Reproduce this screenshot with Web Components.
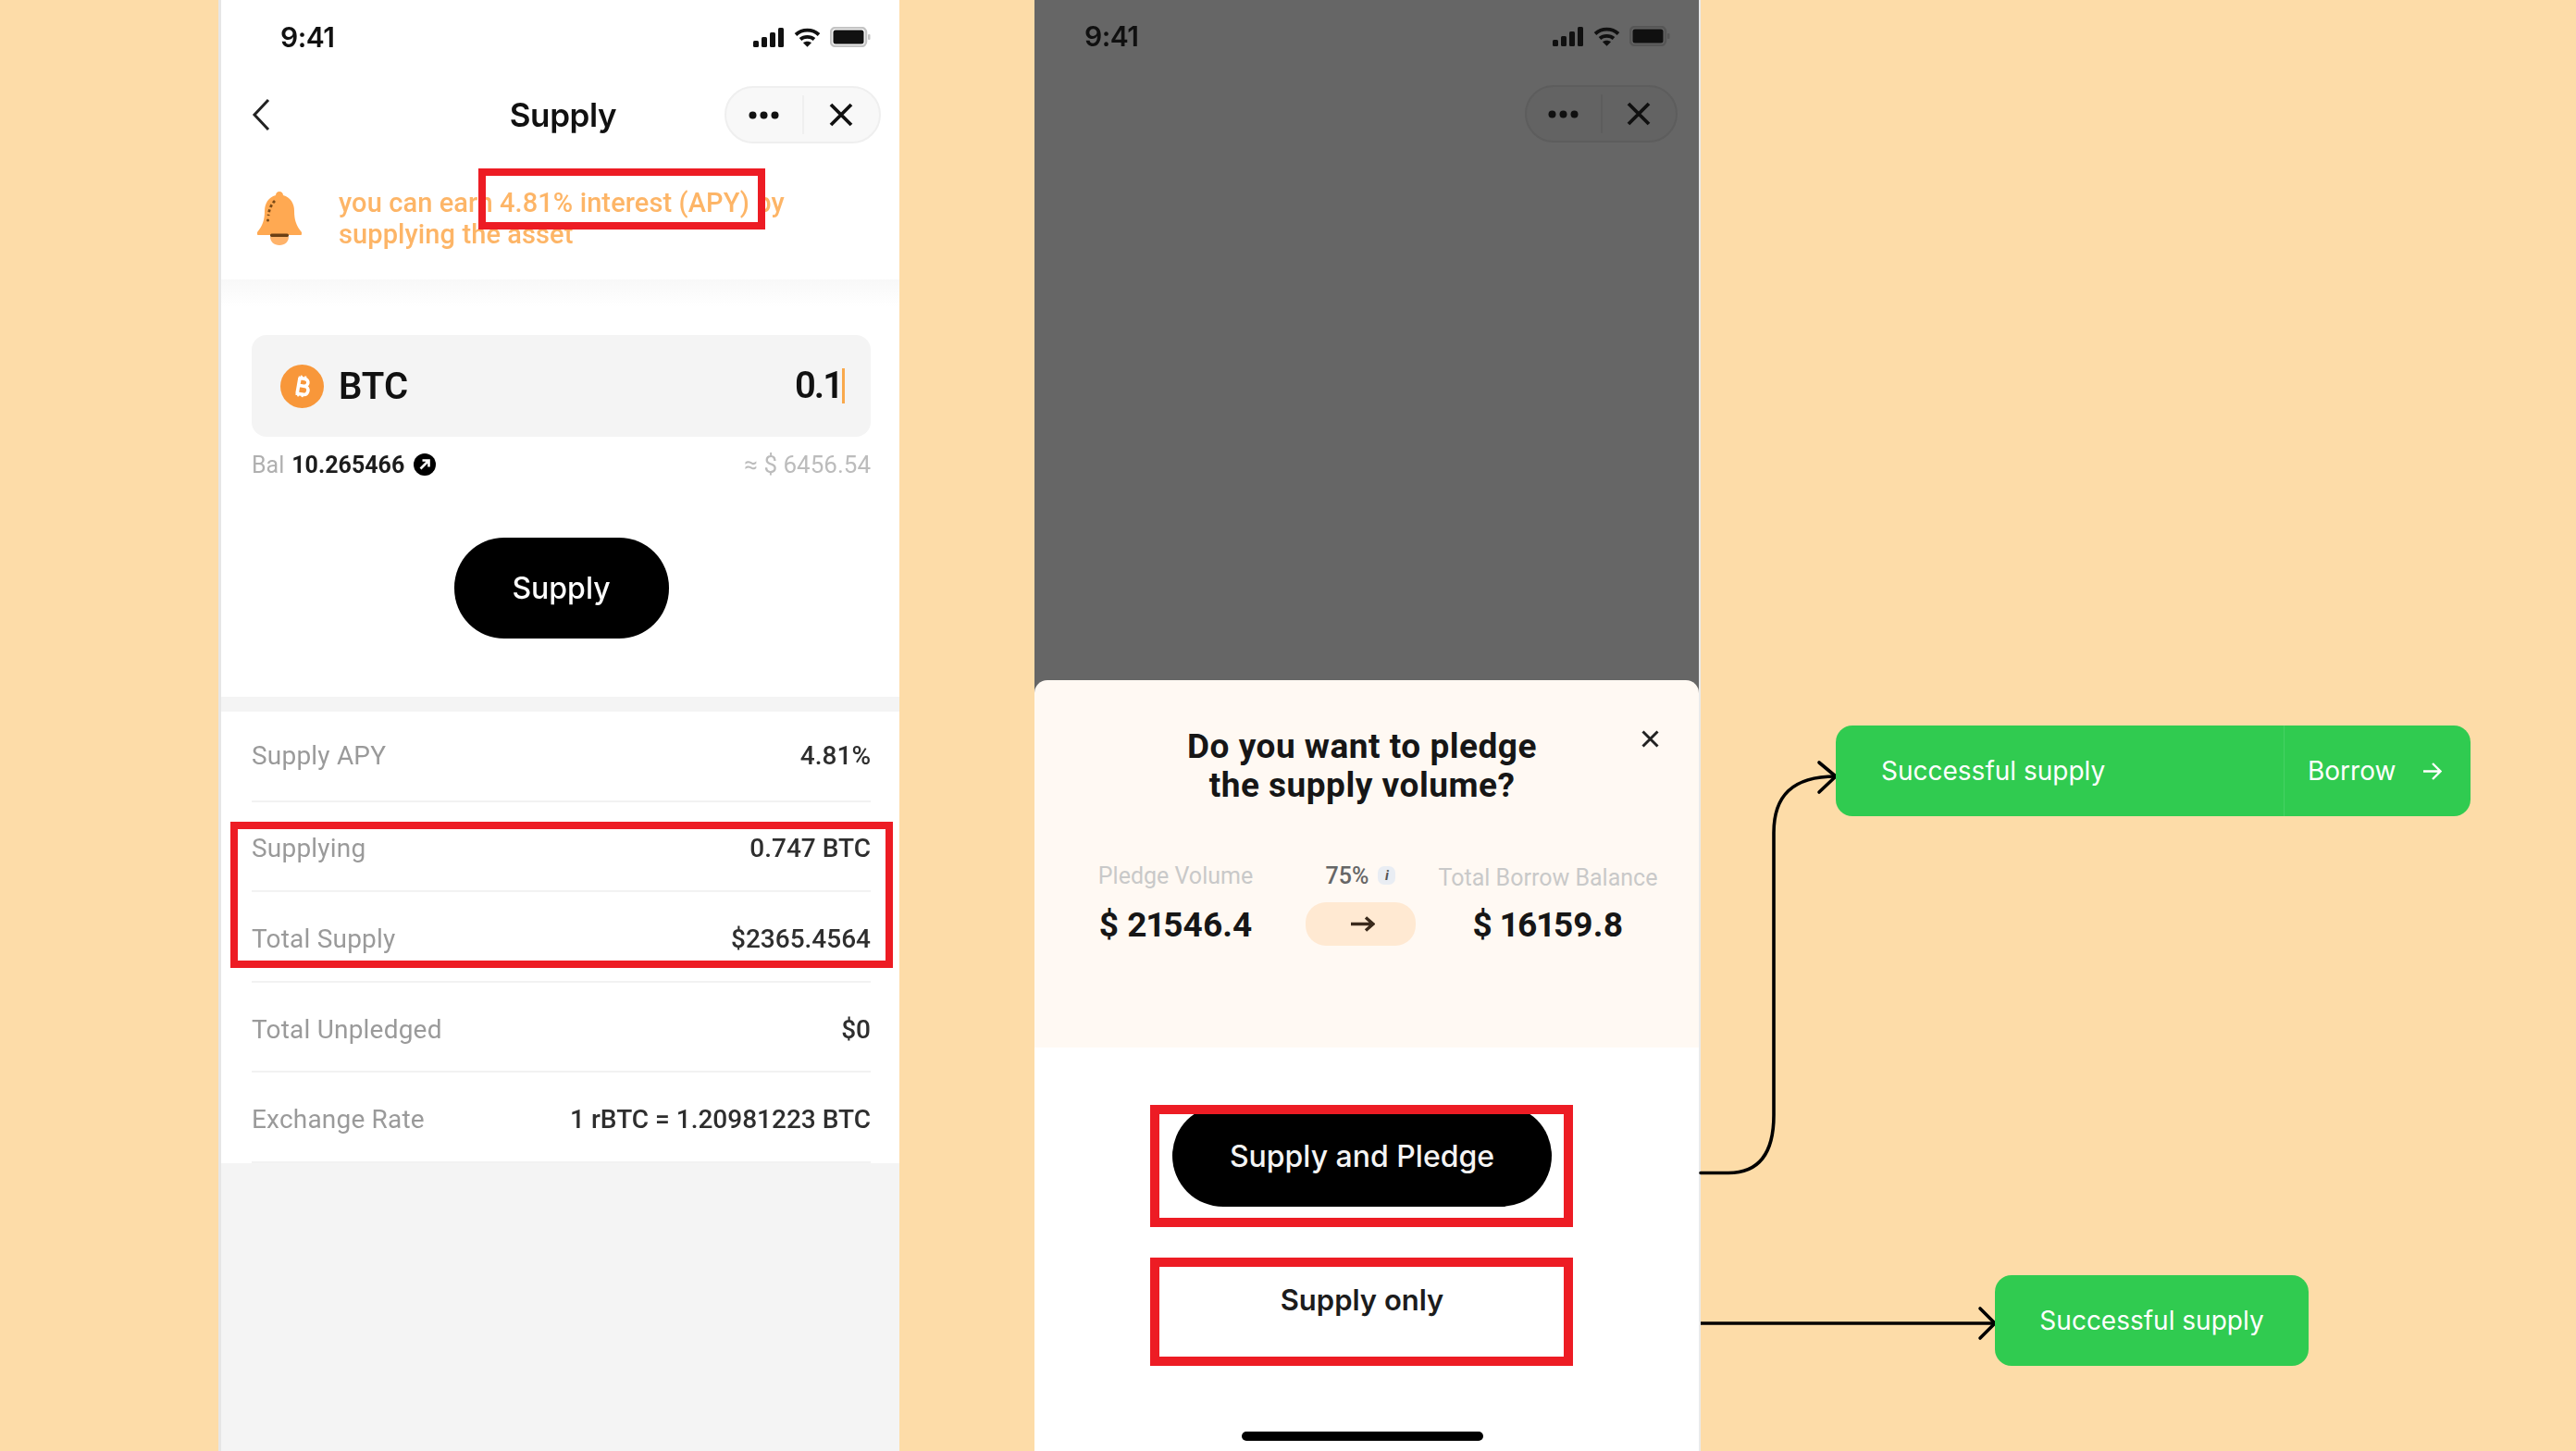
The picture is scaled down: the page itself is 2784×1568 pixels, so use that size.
<!DOCTYPE html>
<html>
<head>
<meta charset="utf-8">
<title>Supply flow</title>
<style>
  html, body { margin: 0; padding: 0; background: #fddca8; }
  body { width: 2784px; height: 1568px; overflow: hidden; font-family: Roboto, "Liberation Sans", sans-serif; }
  flow-canvas { width: 2784px; height: 1568px; }
  stat-row:first-child { --row-shift: 0px; }
</style>
</head>
<body>
<flow-canvas>
  <supply-screen>
    <stat-row>Supply APY<span slot="value">4.81%</span></stat-row>
    <stat-row>Supplying<span slot="value">0.747 BTC</span></stat-row>
    <stat-row>Total Supply<span slot="value">$2365.4564</span></stat-row>
    <stat-row>Total Unpledged<span slot="value">$0</span></stat-row>
    <stat-row>Exchange Rate<span slot="value">1 rBTC = 1.20981223 BTC</span></stat-row>
  </supply-screen>

  <pledge-screen></pledge-screen>

  <flow-arrows></flow-arrows>

  <success-toast style="left:1984px;top:784px;width:686px;height:98px;--pad:49px">
    Successful supply
    <span slot="action">Borrow</span>
  </success-toast>
  <success-toast center style="left:2156px;top:1378px;width:339px;height:98px">Successful supply</success-toast>

  <!-- red review marks sit on top of the screens -->
  <mark-box style="left:517px;top:182px;width:310px;height:66px"></mark-box>
  <mark-box style="left:249px;top:888px;width:716px;height:158px"></mark-box>
  <mark-box thick style="left:1243px;top:1194px;width:457px;height:132px"></mark-box>
  <mark-box thick style="left:1243px;top:1359px;width:457px;height:117px"></mark-box>
</flow-canvas>

<script>
// Small base class, each element only brings its own markup
class ShadowPart extends HTMLElement {
  constructor() {
    super();
    this.attachShadow({ mode: "open" });
    const t = document.createElement("template");
    t.innerHTML = this.markup;
    this.shadowRoot.appendChild(t.content.cloneNode(true));
  }
}

class FlowCanvas extends ShadowPart {
  get markup() {
    return `
    <style>
      :host { display: block; position: relative; overflow: hidden; background: #fddca8; }
    </style>
    <slot></slot>`;
  }
}

class StatusBar extends ShadowPart {
  get markup() {
    return `
    <style>
      :host {
        display: flex;
        align-items: center;
        justify-content: space-between;
        height: var(--bar-h, 80px);
        padding: 0 31px 0 var(--time-left, 64px);
        color: var(--ink, #111);
      }
      .time { font: 600 30px Inter, "Liberation Sans", sans-serif; letter-spacing: -0.5px; }
      .icons { display: flex; align-items: center; gap: 10px; }
      svg { display: block; }
    </style>
    <span class="time">9:41</span>
    <span class="icons">
      <svg width="34" height="21" viewBox="0 0 34 21" fill="currentColor">
        <rect x="0" y="14" width="6" height="7" rx="1.5"/>
        <rect x="9" y="10" width="6" height="11" rx="1.5"/>
        <rect x="18" y="5" width="6" height="16" rx="1.5"/>
        <rect x="27" y="0" width="6" height="21" rx="1.5"/>
      </svg>
      <svg width="29" height="21" viewBox="0 0 29 21" fill="none" stroke="currentColor" stroke-width="3.8">
        <path d="M2 7.500C9 1 20 1 27 7.500"/>
        <path d="M7 12.500C11 9 18 9 22 12.500"/>
        <path d="M14.500 20.800L10 16.200C12.500 14.200 16.500 14.200 19 16.200Z" fill="currentColor" stroke="none"/>
      </svg>
      <svg width="44" height="22" viewBox="0 0 44 22">
        <rect x="1" y="1" width="38" height="20" rx="5" fill="none" stroke="var(--shell, #c4c4c4)" stroke-width="2.500"/>
        <rect x="3.500" y="3.500" width="33" height="15" rx="2.500" fill="currentColor"/>
        <rect x="41" y="8" width="2.500" height="6" rx="1" fill="var(--shell, #c4c4c4)"/>
      </svg>
    </span>`;
  }
}

class NavPill extends ShadowPart {
  get markup() {
    return `
    <style>
      :host {
        display: grid;
        grid-template-columns: 1fr 1fr;
        box-sizing: border-box;
        align-items: center;
        justify-items: center;
        width: var(--pill-w, 169px);
        height: 62px;
        border-radius: 31px;
        border: 2px solid var(--pill-line, #efefef);
        background: var(--pill-bg, #f8f8f8);
        color: var(--ink, #111);
      }
      .more { display: flex; align-items: center; justify-content: center; width: 100%; height: 42px; border-right: 2px solid var(--pill-line, #efefef); }
      svg { display: block; }
    </style>
    <span class="more">
      <svg width="33" height="9" viewBox="0 0 33 9" fill="currentColor"><circle cx="4.500" cy="4.500" r="4"/><circle cx="16.500" cy="4.500" r="4"/><circle cx="28.500" cy="4.500" r="4"/></svg>
    </span>
    <svg width="26" height="26" viewBox="0 0 26 26" fill="none" stroke="currentColor" stroke-width="3.800"><path d="M2 2L24 24M24 2L2 24"/></svg>`;
  }
}

class StatRow extends ShadowPart {
  get markup() {
    return `
    <style>
      :host {
        display: flex;
        align-items: center;
        justify-content: space-between;
        box-sizing: border-box;
        height: 97.6px;
        padding-top: var(--row-shift, 5px);
        border-bottom: 2px solid #f2f2f2;
        font: 400 28px Roboto, "Liberation Sans", sans-serif;
        letter-spacing: 0.2px;
        color: #9a9a9a;
      }
      .value { color: #2e2e2e; font-weight: 500; letter-spacing: 0; }
    </style>
    <span><slot></slot></span>
    <span class="value"><slot name="value"></slot></span>`;
  }
}

class SupplyScreen extends ShadowPart {
  get markup() {
    return `
    <style>
      :host {
        display: block;
        position: absolute;
        left: 236px;
        top: 0;
        width: 736px;
        height: 1568px;
        box-sizing: border-box;
        border-left: 3px solid #e6e6e6;
        background: #fff;
        overflow: hidden;
      }
      .screen { display: flex; flex-direction: column; height: 100%; filter: blur(0.7px); font-family: Roboto, "Liberation Sans", sans-serif; }
      nav {
        display: grid;
        grid-template-columns: 1fr auto 1fr;
        align-items: center;
        height: 62px;
        margin-top: 13px;
        padding: 0 20px 0 33px;
      }
      nav svg { display: block; }
      nav nav-pill { justify-self: end; }
      h1 { margin: 0 7px 0 0; font: 600 35px Inter, "Liberation Sans", sans-serif; color: #111; letter-spacing: -0.4px; }
      .banner {
        display: flex;
        align-items: center;
        gap: 40px;
        padding: 47px 90px 32px 39px;
        color: #fdb567;
        font: 500 29px/34px Roboto, "Liberation Sans", sans-serif;
        letter-spacing: 0.1px;
      }
      .banner svg { flex: none; display: block; }
      .form {
        display: flex;
        flex-direction: column;
        padding: 60px 31px 63px 33px;
        background: linear-gradient(#f8f8f8, #fff 30px);
      }
      .input {
        display: flex;
        align-items: center;
        gap: 16px;
        height: 110px;
        padding: 0 28px 0 31px;
        border-radius: 16px;
        background: #f4f4f4;
        color: #111;
        font: 600 40px Roboto, "Liberation Sans", sans-serif;
      }
      .input svg { display: block; }
      .amount { margin-left: auto; border-right: 3px solid #f9a94c; line-height: 38px; letter-spacing: -2px; }
      .bal {
        display: flex;
        align-items: center;
        gap: 8px;
        height: 24px;
        margin-top: 18px;
        color: #b0b0b0;
        font-size: 25px;
      }
      .bal b { color: #1c1c1c; font-weight: 700; }
      .bal svg { display: block; margin-left: 2px; }
      .usd { margin-left: auto; color: #bcbcbc; font-size: 26px; }
      .go {
        align-self: center;
        display: flex;
        align-items: center;
        justify-content: center;
        width: 232px;
        height: 109px;
        margin-top: 67px;
        border-radius: 54px;
        background: #000;
        color: #fff;
        font: 500 32px Inter, "Liberation Sans", sans-serif;
      }
      .band { height: 16px; flex: none; background: #f4f4f4; }
      .stats { padding: 0 31px 0 33px; }
      .rest { flex: 1; background: #f4f4f4; }
    </style>
    <div class="screen">
      <status-bar></status-bar>
      <nav>
        <svg width="20" height="36" viewBox="0 0 20 36" fill="none" stroke="#222" stroke-width="3"><path d="M18 2L3 18L18 34"/></svg>
        <h1>Supply</h1>
        <nav-pill></nav-pill>
      </nav>
      <div class="banner">
        <svg width="48" height="58" viewBox="0 0 48 58">
          <path d="M24 0c2.500 0 4 1.800 4 4 8 2 12 9 12 17 0 9 2 16 8 23 1 2 0 3-2 3H2c-2 0-3-1-2-3 6-7 8-14 8-23 0-8 4-15 12-17 0-2.200 1.500-4 4-4z" fill="#ffa952"/>
          <path d="M14 49h20c0 5-4 9-10 9s-10-4-10-9z" fill="#ffb36a"/>
          <rect x="14" y="45.500" width="20" height="3.500" rx="1.500" fill="#6a3f14"/>
          <path d="M19 10C16 13 13 18 12 26" fill="none" stroke="#7a4a17" stroke-width="2.800" stroke-dasharray="3 2.500"/>
          <circle cx="11.500" cy="31" r="1.500" fill="#7a4a17"/>
        </svg>
        <span>you can earn 4.81% interest (APY) by supplying the asset</span>
      </div>
      <div class="form">
        <div class="input">
          <svg width="47" height="47" viewBox="0 0 47 47">
            <circle cx="23.500" cy="23.500" r="23.500" fill="#f8973a"/>
            <g transform="rotate(10 23.500 23.500)" fill="none" stroke="#fff" stroke-width="3.600">
              <path d="M18 15h7c5.500 0 5.500 8 0 8h-7M18 23h8.500c5.500 0 5.500 9 0 9h-8.500M19.500 15v17"/>
              <path d="M21 12v3M25.500 12v3M21 32v3M25.500 32v3" stroke-width="2"/>
            </g>
          </svg>
          <span>BTC</span>
          <span class="amount">0.1</span>
        </div>
        <div class="bal">
          <span>Bal</span>
          <b>10.265466</b>
          <svg width="24" height="24" viewBox="0 0 24 24">
            <circle cx="12" cy="12" r="12" fill="#000"/>
            <path d="M7.500 16.500L16 8M9.500 7.500H16.500V14.500" fill="none" stroke="#fff" stroke-width="2.600"/>
          </svg>
          <span class="usd">≈ $ 6456.54</span>
        </div>
        <div class="go">Supply</div>
      </div>
      <div class="band"></div>
      <div class="stats"><slot></slot></div>
      <div class="rest"></div>
    </div>`;
  }
}

class PledgeScreen extends ShadowPart {
  get markup() {
    return `
    <style>
      :host {
        display: block;
        position: absolute;
        left: 1118px;
        top: 0;
        width: 720px;
        height: 1568px;
        box-sizing: border-box;
        border-right: 2px solid #eaeaea;
        overflow: hidden;
        background: #666;
      }
      .screen { display: flex; flex-direction: column; height: 100%; filter: blur(0.7px); }
      .dim {
        flex: 1;
        --ink: #101010;
        --shell: #565656;
        --time-left: 54px;
        --bar-h: 78px;
        --pill-w: 165px;
        --pill-bg: #636363;
        --pill-line: #5d5d5d;
      }
      .top { display: flex; justify-content: flex-end; margin-top: 14px; padding-right: 23px; }
      .sheet {
        position: relative;
        box-sizing: border-box;
        height: 397px;
        padding-top: 51px;
        border-radius: 14px 14px 0 0;
        background: #fff9f3;
      }
      h2 {
        margin: 0;
        padding-right: 10px;
        text-align: center;
        color: #161616;
        font: 700 37px/42px Roboto, "Liberation Sans", sans-serif;
        letter-spacing: 0.5px;
      }
      .close { position: absolute; left: 656px; top: 54px; display: block; }
      .figures {
        display: grid;
        grid-template-columns: 281px 119px 286px;
        grid-template-rows: 24px 47px;
        row-gap: 17px;
        margin-top: 64px;
        padding-left: 12px;
        justify-items: center;
        align-items: center;
        font-family: Roboto, "Liberation Sans", sans-serif;
      }
      .cap { color: #c9c9c9; font-size: 25px; }
      .cap.low { position: relative; top: 2px; }
      .ratio { display: flex; align-items: center; gap: 10px; color: #666; font-size: 25px; font-weight: 500; }
      .info {
        display: flex;
        align-items: center;
        justify-content: center;
        width: 19px;
        height: 20px;
        border-radius: 7px;
        background: #e9edf3;
        color: #555;
        font-size: 15px;
        font-style: italic;
        font-weight: 700;
      }
      .sum { color: #161616; font-size: 37px; font-weight: 700; font-variant-numeric: proportional-nums; position: relative; top: 1px; }
      .pill {
        display: flex;
        align-items: center;
        justify-content: center;
        width: 119px;
        height: 47px;
        border-radius: 22px;
        background: #ffe9d2;
      }
      .pill svg { display: block; margin-left: 5px; }
      .actions {
        flex: none;
        display: flex;
        flex-direction: column;
        align-items: center;
        box-sizing: border-box;
        height: 436px;
        padding: 62px 10px 0 0;
        background: #fff;
        font-family: Inter, "Liberation Sans", sans-serif;
      }
      .primary {
        display: flex;
        align-items: center;
        justify-content: center;
        width: 410px;
        height: 110px;
        border-radius: 55px;
        background: #000;
        color: #f4f4f4;
        font-size: 32px;
        font-weight: 500;
      }
      .plain { margin-top: 81px; height: 40px; line-height: 40px; color: #1c1c1c; font-size: 31px; font-weight: 600; }
      .home { margin-top: 122px; width: 261px; height: 10px; border-radius: 5px; background: #000; }
    </style>
    <div class="screen">
      <div class="dim">
        <status-bar></status-bar>
        <div class="top"><nav-pill></nav-pill></div>
      </div>
      <div class="sheet">
        <h2>Do you want to pledge<br>the supply volume?</h2>
        <svg class="close" width="19" height="19" viewBox="0 0 19 19" fill="none" stroke="#222" stroke-width="3"><path d="M1.500 1.500L17.500 17.500M17.500 1.500L1.500 17.500"/></svg>
        <div class="figures">
          <span class="cap">Pledge Volume</span>
          <span class="ratio">75% <span class="info">i</span></span>
          <span class="cap low">Total Borrow Balance</span>
          <span class="sum">$ 21546.4</span>
          <span class="pill">
            <svg width="26" height="19" viewBox="0 0 26 19" fill="none" stroke="#3a2a1c" stroke-width="3.400"><path d="M0 9.500H24M16 2.500L24 9.500L16 16.500"/></svg>
          </span>
          <span class="sum">$ 16159.8</span>
        </div>
      </div>
      <div class="actions">
        <div class="primary">Supply and Pledge</div>
        <div class="plain">Supply only</div>
        <div class="home"></div>
      </div>
    </div>`;
  }
}

class SuccessToast extends ShadowPart {
  get markup() {
    return `
    <style>
      :host {
        display: flex;
        position: absolute;
        box-sizing: border-box;
        border-radius: 18px;
        background: #30cb50;
        color: #fff;
        font: 400 28px Inter, "Liberation Sans", sans-serif;
      }
      .main { flex: 1; display: flex; align-items: center; padding-left: var(--pad, 0); }
      :host([center]) .main { justify-content: center; }
      .action {
        display: flex;
        align-items: center;
        gap: 29px;
        width: 202px;
        box-sizing: border-box;
        padding-left: 25px;
        border-left: 1px solid #45d263;
      }
      :host([center]) .action { display: none; }
      svg { display: block; }
    </style>
    <div class="main"><slot></slot></div>
    <div class="action">
      <slot name="action"></slot>
      <svg width="21" height="21" viewBox="0 0 21 21" fill="none" stroke="#fff" stroke-width="2.400"><path d="M1 10.500H19M11 2L19.500 10.500L11 19"/></svg>
    </div>`;
  }
}

class MarkBox extends ShadowPart {
  get markup() {
    return `
    <style>
      :host {
        display: block;
        position: absolute;
        box-sizing: border-box;
        border: 8px solid #ed1c24;
      }
      :host([thick]) { border-width: 10px; }
    </style>`;
  }
}

class FlowArrows extends ShadowPart {
  get markup() {
    return `
    <style>
      :host { display: block; position: absolute; left: 0; top: 0; }
      svg { display: block; }
    </style>
    <svg width="2784" height="1568" viewBox="0 0 2784 1568" fill="none" stroke="#000" stroke-width="3.600" stroke-linecap="round" stroke-linejoin="round">
      <path d="M1838 1267.500H1868C1898 1267.500 1917 1250 1917 1205V900C1917 860 1937 839 1984 839"/>
      <path d="M1966 824L1984 839L1966 856"/>
      <path d="M1838 1430H2156" stroke-linecap="butt"/>
      <path d="M2140 1414L2156 1430L2140 1446"/>
    </svg>`;
  }
}

customElements.define("flow-canvas", FlowCanvas);
customElements.define("status-bar", StatusBar);
customElements.define("nav-pill", NavPill);
customElements.define("stat-row", StatRow);
customElements.define("supply-screen", SupplyScreen);
customElements.define("pledge-screen", PledgeScreen);
customElements.define("success-toast", SuccessToast);
customElements.define("mark-box", MarkBox);
customElements.define("flow-arrows", FlowArrows);
</script>
</body>
</html>
